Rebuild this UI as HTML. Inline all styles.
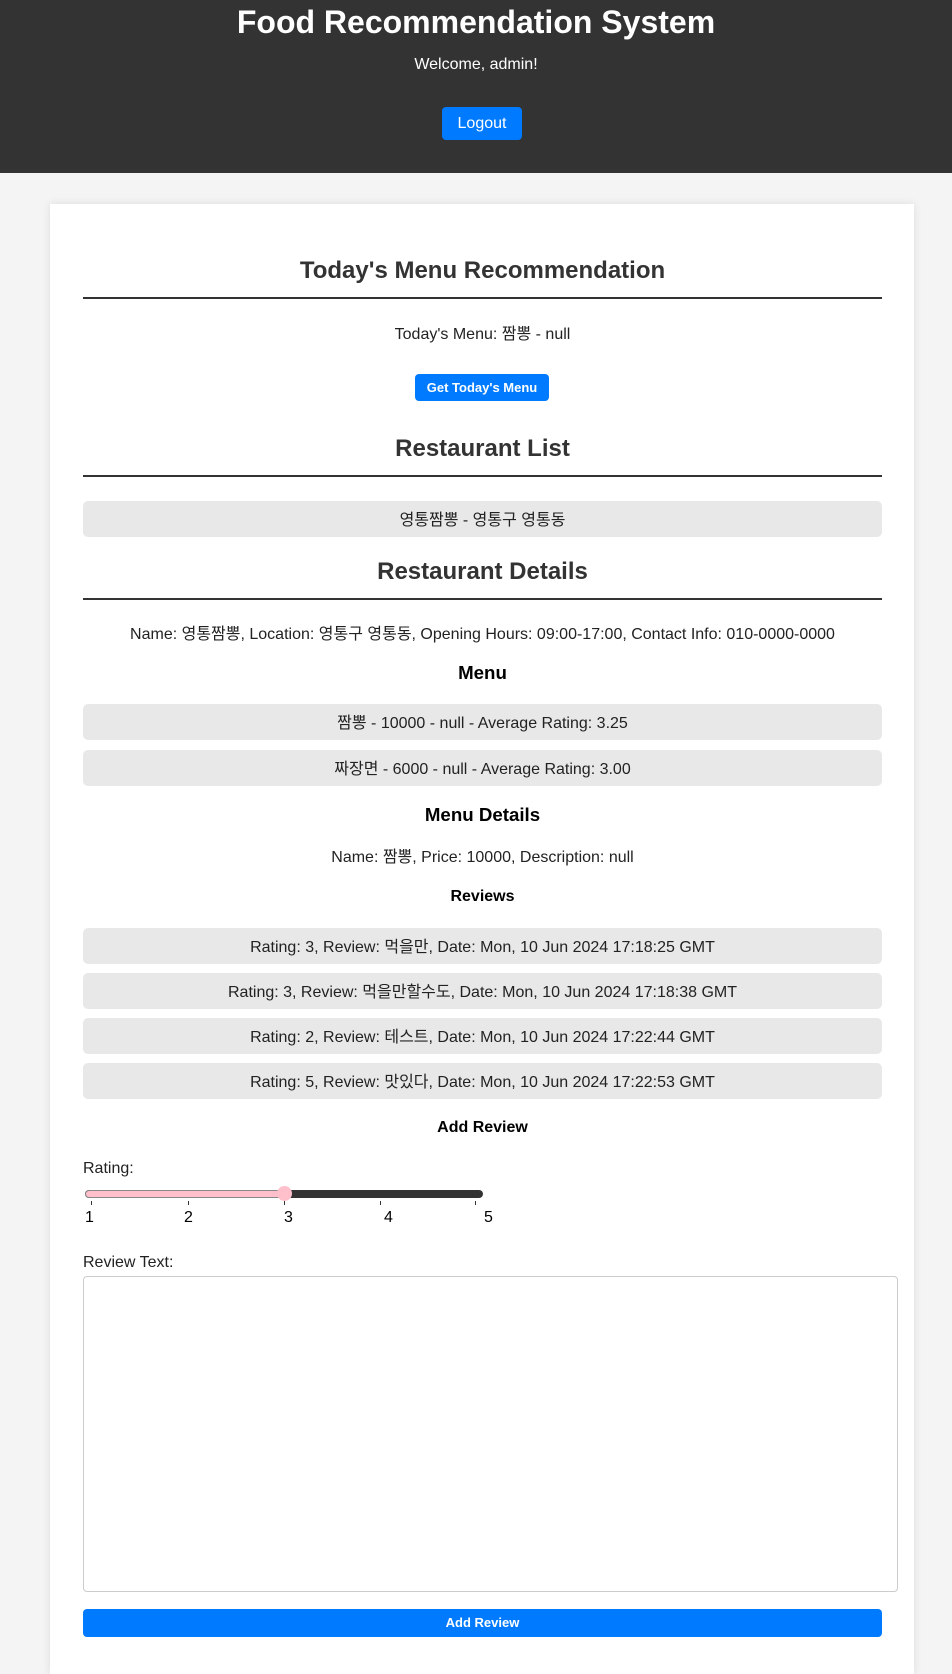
<!DOCTYPE html>
<html><head><meta charset="utf-8"><style>
*{margin:0;padding:0;box-sizing:border-box}
body{width:952px;height:1660px;background:#f4f4f4;font-family:"Liberation Sans","Noto Sans CJK KR",sans-serif;position:relative;overflow:hidden;color:#000}
.a{position:absolute;white-space:nowrap}
.c{left:83px;width:799px;text-align:center}
header{position:absolute;left:0;top:0;width:952px;height:173px;background:#333}
.card{position:absolute;left:50px;top:204px;width:864px;height:1470px;background:#fff;box-shadow:0 0 8px rgba(0,0,0,.1)}
.btn{position:absolute;background:#007bff;color:#fff;border-radius:4px;text-align:center}
.hr{position:absolute;left:83px;width:799px;height:2px;background:#333}
.li{position:absolute;left:83px;width:799px;height:36px;background:#e8e8e8;border-radius:5px;text-align:center;line-height:36px;padding-top:2px;font-size:16px;color:#222}
h2{font-size:24px;color:#333}
</style></head><body>
<header></header>
<div class="a" style="left:0;width:952px;text-align:center;top:4px;font-size:32px;font-weight:bold;color:#fff;line-height:36px">Food Recommendation System</div>
<div class="a" style="left:0;width:952px;text-align:center;top:56px;font-size:16px;color:#fff;line-height:18px">Welcome, admin!</div>
<div class="btn" style="left:442px;top:107px;width:80px;height:33px;line-height:33px;font-size:16px">Logout</div>
<div class="card"></div>

<div class="a c" style="top:256px;line-height:30px"><h2>Today's Menu Recommendation</h2></div>
<div class="hr" style="top:297px"></div>
<div class="a c" style="top:326px;font-size:16px;line-height:18px;color:#222">Today's Menu: 짬뽕 - null</div>
<div class="btn" style="left:415px;top:374px;width:134px;height:27px;line-height:27px;font-size:13px;font-weight:bold">Get Today's Menu</div>

<div class="a c" style="top:434px;line-height:30px"><h2>Restaurant List</h2></div>
<div class="hr" style="top:475px"></div>
<div class="li" style="top:501px">영통짬뽕 - 영통구 영통동</div>

<div class="a c" style="top:557px;line-height:30px"><h2>Restaurant Details</h2></div>
<div class="hr" style="top:598px"></div>
<div class="a c" style="top:626px;font-size:16px;line-height:18px;color:#222">Name: 영통짬뽕, Location: 영통구 영통동, Opening Hours: 09:00-17:00, Contact Info: 010-0000-0000</div>
<div class="a c" style="top:662px;font-size:18.7px;font-weight:bold;line-height:22px">Menu</div>
<div class="li" style="top:704px">짬뽕 - 10000 - null - Average Rating: 3.25</div>
<div class="li" style="top:750px">짜장면 - 6000 - null - Average Rating: 3.00</div>
<div class="a c" style="top:804px;font-size:18.7px;font-weight:bold;line-height:22px">Menu Details</div>
<div class="a c" style="top:849px;font-size:16px;line-height:18px;color:#222">Name: 짬뽕, Price: 10000, Description: null</div>
<div class="a c" style="top:888px;font-size:16px;font-weight:bold;line-height:18px">Reviews</div>
<div class="li" style="top:928px">Rating: 3, Review: 먹을만, Date: Mon, 10 Jun 2024 17:18:25 GMT</div>
<div class="li" style="top:973px">Rating: 3, Review: 먹을만할수도, Date: Mon, 10 Jun 2024 17:18:38 GMT</div>
<div class="li" style="top:1018px">Rating: 2, Review: 테스트, Date: Mon, 10 Jun 2024 17:22:44 GMT</div>
<div class="li" style="top:1063px">Rating: 5, Review: 맛있다, Date: Mon, 10 Jun 2024 17:22:53 GMT</div>
<div class="a c" style="top:1119px;font-size:16px;font-weight:bold;line-height:18px">Add Review</div>

<div class="a" style="left:83px;top:1160px;font-size:16px;line-height:18px;color:#222">Rating:</div>
<div class="a" style="left:85px;top:1190px;width:398px;height:8px;background:#333;border-radius:4px"></div>
<div class="a" style="left:85px;top:1190px;width:200px;height:8px;background:#ffc0cb;border:1px solid #888;border-radius:4px"></div>
<div class="a" style="left:277px;top:1186px;width:15px;height:15px;background:#ffc0cb;border-radius:50%"></div>
<div class="a" style="left:91px;top:1201px;width:1px;height:4px;background:#333"></div>
<div class="a" style="left:188px;top:1201px;width:1px;height:4px;background:#333"></div>
<div class="a" style="left:284px;top:1201px;width:1px;height:4px;background:#333"></div>
<div class="a" style="left:380px;top:1201px;width:1px;height:4px;background:#333"></div>
<div class="a" style="left:475px;top:1201px;width:1px;height:4px;background:#333"></div>
<div class="a" style="left:85px;top:1209px;font-size:16px;line-height:18px">1</div>
<div class="a" style="left:184px;top:1209px;font-size:16px;line-height:18px">2</div>
<div class="a" style="left:284px;top:1209px;font-size:16px;line-height:18px">3</div>
<div class="a" style="left:384px;top:1209px;font-size:16px;line-height:18px">4</div>
<div class="a" style="left:484px;top:1209px;font-size:16px;line-height:18px">5</div>

<div class="a" style="left:83px;top:1254px;font-size:16px;line-height:18px;color:#222">Review Text:</div>
<div class="a" style="left:83px;top:1276px;width:815px;height:316px;border:1px solid #ccc;border-radius:4px;background:#fff"></div>
<div class="btn" style="left:83px;top:1609px;width:799px;height:28px;line-height:28px;font-size:13px;font-weight:bold">Add Review</div>
</body></html>
